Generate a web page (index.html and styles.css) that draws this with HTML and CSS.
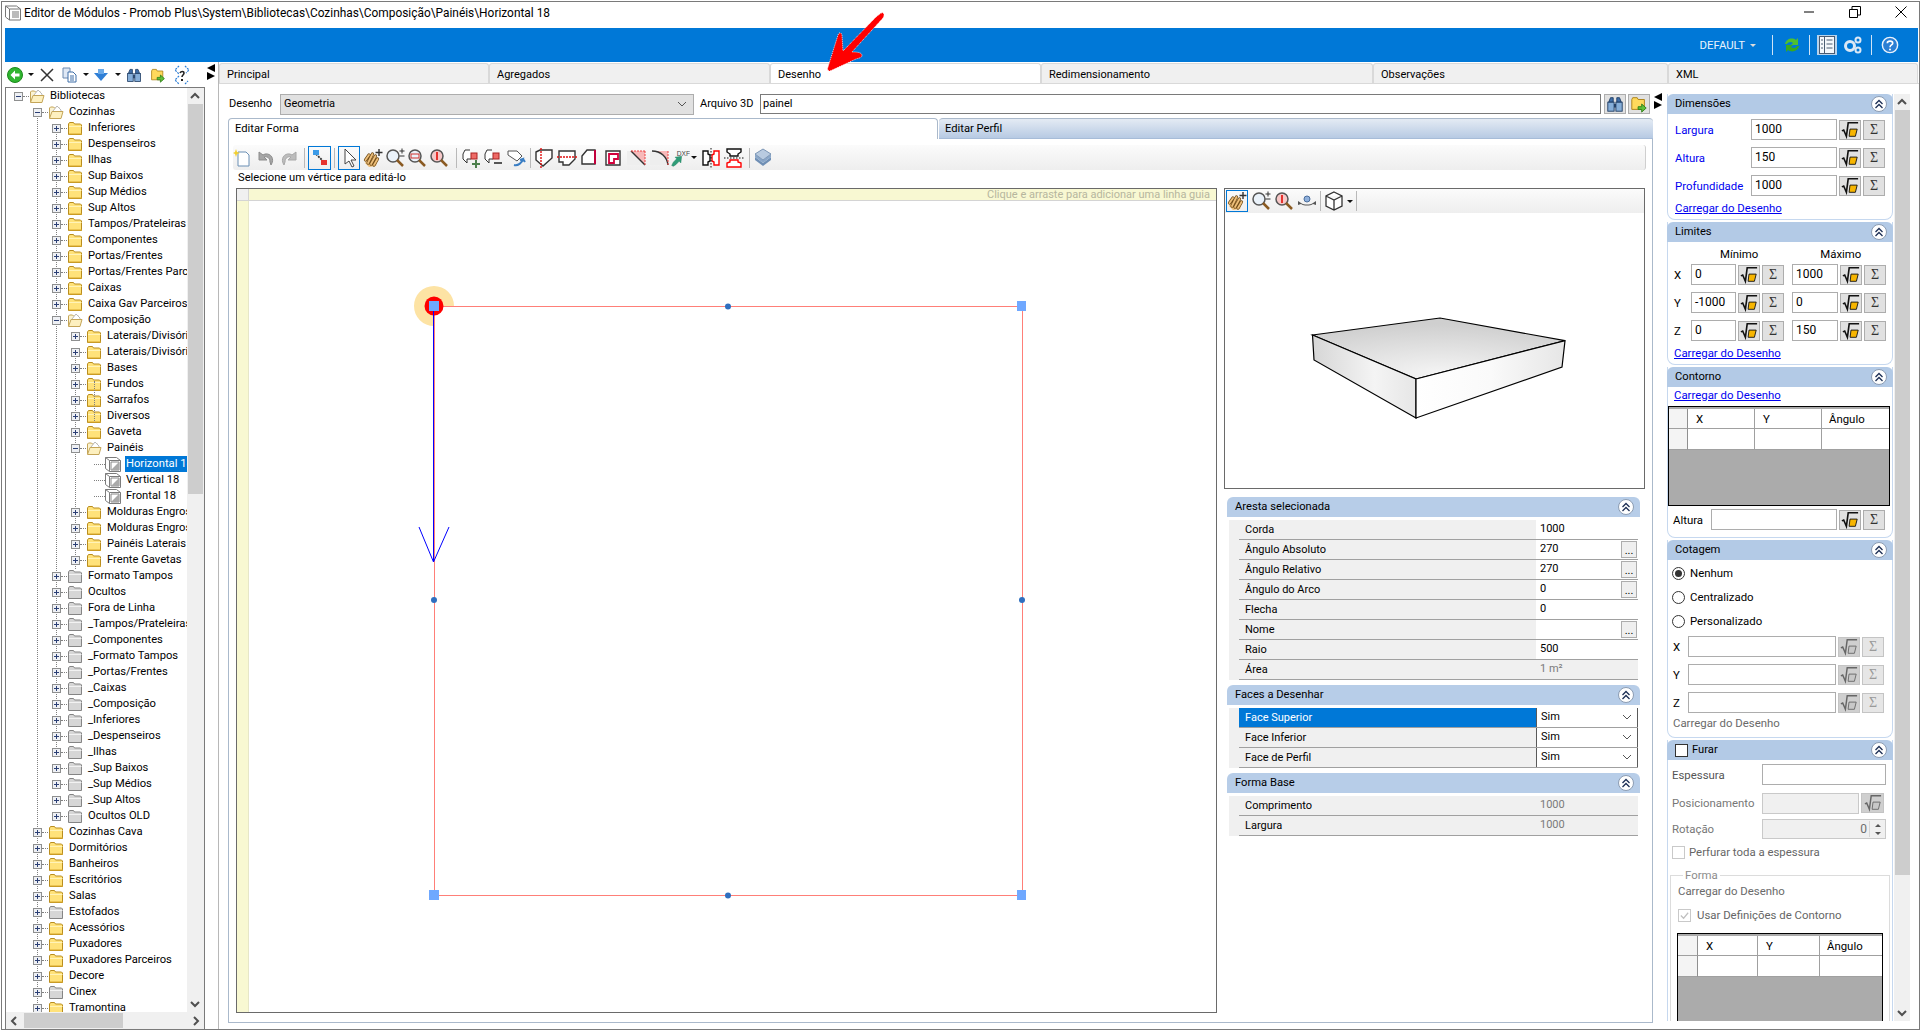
FILE: index.html
```html
<!DOCTYPE html>
<html lang="pt-BR">
<head>
<meta charset="utf-8">
<title>Editor de Módulos</title>
<link rel="stylesheet" href="styles.css">
</head>
<body>
<svg class="sprite" xmlns="http://www.w3.org/2000/svg">
  <symbol id="plus" viewBox="0 0 9 9"><rect x=".5" y=".5" width="8" height="8" fill="#eef0f4" stroke="#8e8f8f"/><path d="M2 4.5h5M4.5 2v5" stroke="#2b3f75"/></symbol>
  <symbol id="minus" viewBox="0 0 9 9"><rect x=".5" y=".5" width="8" height="8" fill="#eef0f4" stroke="#8e8f8f"/><path d="M2 4.5h5" stroke="#2b3f75"/></symbol>
  <symbol id="fy" viewBox="0 0 16 16"><path d="M1.5 14.5V4l1-1.500h4l1 1.500h6l1 1v9.500z" fill="#ffe27a" stroke="#b98d1f"/><path d="M2 6.500h12.500" stroke="#fff3b8"/><path d="M2 14h13" stroke="#d9a92c"/></symbol>
  <symbol id="fg" viewBox="0 0 16 16"><path d="M1.500 14.500V4l1-1.500h4l1 1.500h6l1 1v9.500z" fill="#d6d6d6" stroke="#858585"/><path d="M2 6.500h12.500" stroke="#f2f2f2"/></symbol>
  <symbol id="fo" viewBox="0 0 16 16"><path d="M1.500 14V4l1-1h3l1 1h5v3" fill="#fbf3d2" stroke="#c4a558"/><path d="M5 7l4-5 4 4v2" fill="#fff" stroke="#b9b9b9"/><path d="M1.500 14.500l2.500-7h11l-2 7z" fill="#fdf0bf" stroke="#c4a558"/></symbol>
  <symbol id="cube" viewBox="0 0 16 16"><path d="M.5 1.500h11l4 3v11h-11l-4-3z" fill="#fff" stroke="#7c7c7c"/><path d="M.5 1.500l4 3h11M4.500 4.500v11" fill="none" stroke="#7c7c7c"/><path d="M6 6h8v8H6z" fill="#fff" stroke="#888"/><path d="M14 6v8H6z" fill="#a9a9a9"/></symbol>
  <symbol id="back" viewBox="0 0 16 16"><circle cx="8" cy="8" r="7.500" fill="#2fb52f" stroke="#1c8a1c"/><path d="M3.500 8l4.500-4.500V6.500h4.500v3H8v3z" fill="#fff"/></symbol>
  <symbol id="x" viewBox="0 0 16 16"><path d="M2 2l12 12M14 2L2 14" stroke="#333" stroke-width="1.500"/></symbol>
  <symbol id="copy" viewBox="0 0 16 16"><path d="M1 1h7v10H1z" fill="#dfe8f5" stroke="#6d8ab0"/><path d="M6 5h5l3 3v7H6z" fill="#fff" stroke="#3f6ea8"/><path d="M8 9h4M8 11h4M8 13h4" stroke="#3f6ea8"/></symbol>
  <symbol id="down" viewBox="0 0 16 16"><path d="M1 6h14L8 14z" fill="#2f7fd6"/><path d="M5 2h6v5H5z" fill="#6aa9e8"/></symbol>
  <symbol id="bin" viewBox="0 0 20 20"><path d="M3 8l2-5h3v5zM12 8V3h3l2 5z" fill="#3f6ea8" stroke="#1d3b63"/><rect x="2" y="8" width="7" height="10" fill="#86aed8" stroke="#1d3b63"/><rect x="11" y="8" width="7" height="10" fill="#86aed8" stroke="#1d3b63"/><path d="M9 10h2v4H9z" fill="#1d3b63"/></symbol>
  <symbol id="fgo" viewBox="0 0 20 20"><path d="M2 16V5l1-2h5l1 2h7v11z" fill="#ffd95c" stroke="#a87d10"/><path d="M9 13h4v-3l5 4.500-5 4.500v-3H9z" fill="#5fbf3a" stroke="#2c7d16"/></symbol>
  <symbol id="tq" viewBox="0 0 16 20"><path d="M5 1L1 5l4 4M11 1l4 4-3 3M5 11l-4 4 4 4M11 19l3-3" fill="none" stroke="#2f7fd6" stroke-width="1.200" stroke-dasharray="2 1"/><path d="M6 8c1-2 4-2 4 0 0 2-2 2-2 4" fill="none" stroke="#222" stroke-width="1.600"/><path d="M7 14h2v2H7z" fill="#222"/></symbol>
  <symbol id="new" viewBox="0 0 20 20"><path d="M5 4h8l3 3v11H5z" fill="#fff" stroke="#6a8fb4"/><path d="M3 1l1 3 3 1-3 1-1 3-1-3-2-1 2-1z" fill="#f2cf2e"/></symbol>
  <symbol id="undo" viewBox="0 0 20 20"><path d="M3 4v8h8L8 9c3-1 6 1 6 5l1 3c4-6 0-12-6-11l-2 1z" fill="#a6a6a6" stroke="#8c8c8c"/></symbol>
  <symbol id="redo" viewBox="0 0 20 20"><path d="M17 4v8H9l3-3c-3-1-6 1-6 5l-1 3C1 11 5 5 11 6l2 1z" fill="#bdbdbd" stroke="#a8a8a8"/></symbol>
  <symbol id="vtx" viewBox="0 0 20 20"><path d="M6 6l8 8" stroke="#333" stroke-width="1.800" stroke-dasharray="2 1"/><rect x="3" y="2" width="6" height="5" fill="#3c9be8"/><rect x="11" y="12" width="6" height="5" fill="#e5332e"/></symbol>
  <symbol id="arrow" viewBox="0 0 20 20"><path d="M6 1v15l4-3 3 6 2-1-3-6h5z" fill="#fff" stroke="#444"/></symbol>
  <symbol id="hand" viewBox="0 0 20 20"><path d="M2 15L6 8h6l3 4-2 6-7 1z" fill="#eebf7a"/><g fill="none" stroke-linecap="round"><path d="M2.500 12L6 7M5 15L9.500 6M8 16L12.500 8M11 17L14.500 11" stroke="#6e4a17" stroke-width="3.200"/><path d="M2.500 12L6 7M5 15L9.500 6M8 16L12.500 8M11 17L14.500 11" stroke="#eebf7a" stroke-width="1.800"/></g><path d="M16 1v7M12.500 4.500h7" stroke="#333" stroke-width="1.400"/></symbol>
  <symbol id="zp" viewBox="0 0 20 20"><circle cx="8" cy="8" r="6" fill="#eaf2fa" stroke="#555" stroke-width="1.500"/><path d="M12 12l6 6" stroke="#8a5a22" stroke-width="2.500"/><path d="M14.500 3h5M17 .5v5M14.500 8h5" stroke="#333"/></symbol>
  <symbol id="zf" viewBox="0 0 20 20"><circle cx="8" cy="8" r="6" fill="#eaf2fa" stroke="#555" stroke-width="1.500"/><path d="M12 12l6 6" stroke="#8a5a22" stroke-width="2.500"/><rect x="4" y="6" width="8" height="4" fill="none" stroke="#d2322d"/></symbol>
  <symbol id="z1" viewBox="0 0 20 20"><circle cx="8" cy="8" r="6" fill="#f6c8c8" stroke="#555" stroke-width="1.500"/><path d="M12 12l6 6" stroke="#8a5a22" stroke-width="2.500"/><path d="M8 4v8" stroke="#e5332e" stroke-width="2"/></symbol>
  <symbol id="vadd" viewBox="0 0 20 20"><path d="M8 2H3L1 6v5l4 4V11h4" fill="#fff" stroke="#333"/><rect x="9" y="5" width="6" height="6" fill="#ee6a66" stroke="#a22"/><path d="M10 16h8M14 12v8" stroke="#4c7f4c" stroke-width="2"/></symbol>
  <symbol id="vdel" viewBox="0 0 20 20"><path d="M8 2H3L1 6v5l4 4V11h4" fill="#fff" stroke="#333"/><rect x="9" y="5" width="6" height="6" fill="#ee6a66" stroke="#a22"/><path d="M10 15h8" stroke="#555" stroke-width="2"/></symbol>
  <symbol id="vrot" viewBox="0 0 20 20"><path d="M2 3h9l5 5-5 5-9-6z" fill="#fff" stroke="#555"/><path d="M8 17c4 1 8-2 9-6l-3 1 3-1 2 3" fill="none" stroke="#3a7ec4" stroke-width="2"/></symbol>
  <symbol id="c1" viewBox="0 0 20 20"><path d="M2 4l4-2h12v8l-9 8-7-6z" fill="#fff" stroke="#333" stroke-width="1.400"/><path d="M7 0v20" stroke="#e01010" stroke-dasharray="2 1" stroke-width="1.400"/></symbol>
  <symbol id="c2" viewBox="0 0 20 20"><path d="M2 3h16v8l-6 6H6v-3H2z" fill="#fff" stroke="#333" stroke-width="1.400"/><path d="M0 9h20" stroke="#e01010" stroke-dasharray="2 1" stroke-width="1.400"/></symbol>
  <symbol id="c3" viewBox="0 0 20 20"><path d="M2 8l5-6h8v14H2z" fill="#fff" stroke="#333" stroke-width="1.400"/><path d="M15 2v14" stroke="#c2003c" stroke-width="2"/></symbol>
  <symbol id="c4" viewBox="0 0 20 20"><path d="M3 3h14v14H3z" fill="#fff" stroke="#333" stroke-width="1.400"/><path d="M6 6h9v5h-4v4H6z" fill="#fff" stroke="#d2003c" stroke-width="1.800"/></symbol>
  <symbol id="c5" viewBox="0 0 20 20"><path d="M1 3h18v14H1z" fill="#eee"/><path d="M5 3h14v14z" fill="#f7b9b9"/><path d="M5 3l14 14" stroke="#333" stroke-width="1.400"/><path d="M19 3v14M5 3h14" stroke="#e44" stroke-dasharray="2 1"/></symbol>
  <symbol id="c6" viewBox="0 0 20 20"><path d="M1 3h18v14H1z" fill="#eee"/><path d="M3 3c9 0 15 6 16 14V3z" fill="#f7b9b9"/><path d="M3 3c9 0 15 6 16 14" fill="none" stroke="#333" stroke-width="1.400"/><path d="M19 3v14" stroke="#e44" stroke-dasharray="2 1"/></symbol>
  <symbol id="dxf" viewBox="0 0 24 20"><text x="8" y="8" font-size="8" font-family="Liberation Sans" fill="#444">DXF</text><path d="M2 19l2-4 4-4-2-2 8-1-1 8-2-2-4 4-3 2z" fill="#2f9d78" stroke="#1e7a5b" stroke-width=".5"/></symbol>
  <symbol id="mv" viewBox="0 0 20 20"><path d="M2 3h5v3l2 1v6l-2 1v3H2z" fill="#fff" stroke="#111" stroke-width="1.400"/><path d="M18 3h-5v3l-2 1v6l2 1v3h5z" fill="#fff" stroke="#f00" stroke-width="1.400"/><path d="M10 0v20" stroke="#111" stroke-dasharray="1.500 1.500"/></symbol>
  <symbol id="mh" viewBox="0 0 20 20"><path d="M3 1h14v3l-3 2v2H6V6L3 4z" fill="#fff" stroke="#111" stroke-width="1.400"/><path d="M3 19h14v-4l-3-1v-2H6v2l-3 1z" fill="#fff" stroke="#f00" stroke-width="1.400"/><path d="M0 10h20" stroke="#111" stroke-dasharray="1.500 1.500"/></symbol>
  <symbol id="lay" viewBox="0 0 20 20"><path d="M2 12l8 6 8-6v-3l-8 6-8-6z" fill="#6f8fb5"/><path d="M2 9l8 6 8-6V6l-8 6-8-6z" fill="#8aa7c9"/><path d="M10 1l8 5-8 6-8-6z" fill="#b9cbe0" stroke="#7c96b5"/></symbol>
  <symbol id="orbit" viewBox="0 0 20 20"><circle cx="10" cy="8" r="3" fill="#8fb0dc" stroke="#4a6d9c"/><path d="M1 10l3 2c3 2 9 2 12 0l3-2v4l-3-1c-3 2-9 2-12 0l-3 1z" fill="#555"/></symbol>
  <symbol id="box" viewBox="0 0 20 20"><path d="M10 1l8 4v10l-8 4-8-4V5zM2 5l8 4 8-4M10 9v10" fill="#fff" stroke="#333" stroke-width="1.300"/></symbol>
  <symbol id="sync" viewBox="0 0 20 20"><path d="M3 9c1-5 7-7 11-4l2-2v7h-7l2-2c-2-2-5-1-6 1z" fill="#4fc02e"/><path d="M17 11c-1 5-7 7-11 4l-2 2v-7h7l-2 2c2 2 5 1 6-1z" fill="#38a820"/></symbol>
  <symbol id="list" viewBox="0 0 20 20"><rect x="2.500" y="1.500" width="15" height="17" fill="#f4f7fb" stroke="#4b5c72"/><path d="M7.500 1.500v17M9.500 5h6M9.500 9h6M9.500 13h6M4 5h2M4 9h2M4 13h2" stroke="#4b5c72"/></symbol>
  <symbol id="gears" viewBox="0 0 20 20"><circle cx="7" cy="11" r="4.500" fill="none" stroke="#dce8f5" stroke-width="3"/><circle cx="15" cy="5" r="2.500" fill="none" stroke="#dce8f5" stroke-width="2"/><circle cx="15" cy="15" r="2.500" fill="none" stroke="#dce8f5" stroke-width="2"/></symbol>
  <symbol id="help" viewBox="0 0 20 20"><circle cx="10" cy="10" r="8.500" fill="#2b7fd4" stroke="#e8f2fc" stroke-width="1.600"/><path d="M7 8c0-3 6-3 6 0 0 2-3 2-3 4.500" fill="none" stroke="#fff" stroke-width="1.800"/><circle cx="10" cy="15" r="1.100" fill="#fff"/></symbol>
  <symbol id="chev" viewBox="0 0 16 16"><circle cx="8" cy="8" r="7.500" fill="#fff" stroke="#8c9cb2"/><path d="M4.500 8L8 4.500 11.500 8M4.500 12L8 8.500 11.500 12" fill="none" stroke="#1d2f55" stroke-width="1.300"/></symbol>
  <symbol id="sq" viewBox="0 0 20 20"><path d="M1 11l2-1 3 7 2-15h11" fill="none" stroke="#111" stroke-width="1.800"/><path d="M10 9h8l-2 8H9z" fill="#f7b500" stroke="#111"/></symbol>
  <symbol id="sqd" viewBox="0 0 20 20"><path d="M1 11l2-1 3 7 2-15h11" fill="none" stroke="#666" stroke-width="1.600"/><path d="M10 9h8l-2 8H9z" fill="#c8c8c8" stroke="#666"/></symbol>
  <symbol id="wcube" viewBox="0 0 16 16"><path d="M.5 1h11l4 3v11h-11l-4-3z" fill="#fff" stroke="#777"/><path d="M.5 1l4 3h11M4.500 4v11" fill="none" stroke="#777"/><path d="M7 6h7v7H7z" fill="#bbb"/></symbol>
</svg>

<div class="window">
  <header class="titlebar">
    <svg class="ic16"><use href="#wcube"/></svg>
    <span class="title">Editor de Módulos - Promob Plus\System\Bibliotecas\Cozinhas\Composição\Painéis\Horizontal 18</span>
    <div class="winbtns">
      <svg class="wb" viewBox="0 0 12 12"><path d="M1 6h10" stroke="#000"/></svg>
      <svg class="wb" viewBox="0 0 12 12"><path d="M.5 3.500h8v8h-8zM3 3.500V.5h8.500V9H8.500" fill="none" stroke="#000"/></svg>
      <svg class="wb" viewBox="0 0 12 12"><path d="M.5.5l11 11M11.500.5l-11 11" stroke="#000"/></svg>
    </div>
  </header>

  <div class="bluebar">
    <span class="profile">DEFAULT</span><i class="caret white"></i>
    <i class="bsep s1"></i>
    <svg class="ic20"><use href="#sync"/></svg>
    <i class="bsep s2"></i>
    <span class="hilite"><svg class="ic20"><use href="#list"/></svg></span>
    <svg class="ic20 gear"><use href="#gears"/></svg>
    <i class="bsep s3"></i>
    <svg class="ic20 hlp"><use href="#help"/></svg>
  </div>

  <div class="main">
    <aside class="left">
      <div class="ltb">
        <svg class="ic16 a0"><use href="#back"/></svg><i class="caret a5"></i>
        <svg class="ic16 a5"><use href="#x"/></svg>
        <svg class="ic16 a7"><use href="#copy"/></svg><i class="caret a5"></i>
        <svg class="ic16 a4"><use href="#down"/></svg><i class="caret a6"></i>
        <svg class="ic16 a5"><use href="#bin"/></svg>
        <svg class="ic16 a8"><use href="#fgo"/></svg>
        <svg class="ic16t a8"><use href="#tq"/></svg>
      </div>
      <div class="treebox">
        <div class="treewrap">
          <div class="tree">
            <i class="guide g1"></i><i class="guide g2"></i><i class="guide g3"></i><i class="guide g4"></i>
            <div class="tr l0"><svg class="ex"><use href="#minus"/></svg><i class="cn"></i><svg class="fo"><use href="#fo"/></svg><span>Bibliotecas</span></div>
            <div class="tr l1"><svg class="ex"><use href="#minus"/></svg><i class="cn"></i><svg class="fo"><use href="#fo"/></svg><span>Cozinhas</span></div>
            <div class="tr l2"><svg class="ex"><use href="#plus"/></svg><i class="cn"></i><svg class="fo"><use href="#fy"/></svg><span>Inferiores</span></div>
            <div class="tr l2"><svg class="ex"><use href="#plus"/></svg><i class="cn"></i><svg class="fo"><use href="#fy"/></svg><span>Despenseiros</span></div>
            <div class="tr l2"><svg class="ex"><use href="#plus"/></svg><i class="cn"></i><svg class="fo"><use href="#fy"/></svg><span>Ilhas</span></div>
            <div class="tr l2"><svg class="ex"><use href="#plus"/></svg><i class="cn"></i><svg class="fo"><use href="#fy"/></svg><span>Sup Baixos</span></div>
            <div class="tr l2"><svg class="ex"><use href="#plus"/></svg><i class="cn"></i><svg class="fo"><use href="#fy"/></svg><span>Sup Médios</span></div>
            <div class="tr l2"><svg class="ex"><use href="#plus"/></svg><i class="cn"></i><svg class="fo"><use href="#fy"/></svg><span>Sup Altos</span></div>
            <div class="tr l2"><svg class="ex"><use href="#plus"/></svg><i class="cn"></i><svg class="fo"><use href="#fy"/></svg><span>Tampos/Prateleiras</span></div>
            <div class="tr l2"><svg class="ex"><use href="#plus"/></svg><i class="cn"></i><svg class="fo"><use href="#fy"/></svg><span>Componentes</span></div>
            <div class="tr l2"><svg class="ex"><use href="#plus"/></svg><i class="cn"></i><svg class="fo"><use href="#fy"/></svg><span>Portas/Frentes</span></div>
            <div class="tr l2"><svg class="ex"><use href="#plus"/></svg><i class="cn"></i><svg class="fo"><use href="#fy"/></svg><span>Portas/Frentes Parceiros</span></div>
            <div class="tr l2"><svg class="ex"><use href="#plus"/></svg><i class="cn"></i><svg class="fo"><use href="#fy"/></svg><span>Caixas</span></div>
            <div class="tr l2"><svg class="ex"><use href="#plus"/></svg><i class="cn"></i><svg class="fo"><use href="#fy"/></svg><span>Caixa Gav Parceiros</span></div>
            <div class="tr l2"><svg class="ex"><use href="#minus"/></svg><i class="cn"></i><svg class="fo"><use href="#fo"/></svg><span>Composição</span></div>
            <div class="tr l3"><svg class="ex"><use href="#plus"/></svg><i class="cn"></i><svg class="fo"><use href="#fy"/></svg><span>Laterais/Divisórias</span></div>
            <div class="tr l3"><svg class="ex"><use href="#plus"/></svg><i class="cn"></i><svg class="fo"><use href="#fy"/></svg><span>Laterais/Divisórias</span></div>
            <div class="tr l3"><svg class="ex"><use href="#plus"/></svg><i class="cn"></i><svg class="fo"><use href="#fy"/></svg><span>Bases</span></div>
            <div class="tr l3"><svg class="ex"><use href="#plus"/></svg><i class="cn"></i><svg class="fo"><use href="#fy"/></svg><span>Fundos</span></div>
            <div class="tr l3"><svg class="ex"><use href="#plus"/></svg><i class="cn"></i><svg class="fo"><use href="#fy"/></svg><span>Sarrafos</span></div>
            <div class="tr l3"><svg class="ex"><use href="#plus"/></svg><i class="cn"></i><svg class="fo"><use href="#fy"/></svg><span>Diversos</span></div>
            <div class="tr l3"><svg class="ex"><use href="#plus"/></svg><i class="cn"></i><svg class="fo"><use href="#fy"/></svg><span>Gaveta</span></div>
            <div class="tr l3"><svg class="ex"><use href="#minus"/></svg><i class="cn"></i><svg class="fo"><use href="#fo"/></svg><span>Painéis</span></div>
            <div class="tr l4"><i class="cn long"></i><svg class="fo"><use href="#cube"/></svg><span class="sel">Horizontal 18</span></div>
            <div class="tr l4"><i class="cn long"></i><svg class="fo"><use href="#cube"/></svg><span>Vertical 18</span></div>
            <div class="tr l4"><i class="cn long"></i><svg class="fo"><use href="#cube"/></svg><span>Frontal 18</span></div>
            <div class="tr l3"><svg class="ex"><use href="#plus"/></svg><i class="cn"></i><svg class="fo"><use href="#fy"/></svg><span>Molduras Engrossadas</span></div>
            <div class="tr l3"><svg class="ex"><use href="#plus"/></svg><i class="cn"></i><svg class="fo"><use href="#fy"/></svg><span>Molduras Engrossadas</span></div>
            <div class="tr l3"><svg class="ex"><use href="#plus"/></svg><i class="cn"></i><svg class="fo"><use href="#fy"/></svg><span>Painéis Laterais</span></div>
            <div class="tr l3"><svg class="ex"><use href="#plus"/></svg><i class="cn"></i><svg class="fo"><use href="#fy"/></svg><span>Frente Gavetas</span></div>
            <div class="tr l2"><svg class="ex"><use href="#plus"/></svg><i class="cn"></i><svg class="fo"><use href="#fg"/></svg><span>Formato Tampos</span></div>
            <div class="tr l2"><svg class="ex"><use href="#plus"/></svg><i class="cn"></i><svg class="fo"><use href="#fg"/></svg><span>Ocultos</span></div>
            <div class="tr l2"><svg class="ex"><use href="#plus"/></svg><i class="cn"></i><svg class="fo"><use href="#fg"/></svg><span>Fora de Linha</span></div>
            <div class="tr l2"><svg class="ex"><use href="#plus"/></svg><i class="cn"></i><svg class="fo"><use href="#fg"/></svg><span>_Tampos/Prateleiras</span></div>
            <div class="tr l2"><svg class="ex"><use href="#plus"/></svg><i class="cn"></i><svg class="fo"><use href="#fg"/></svg><span>_Componentes</span></div>
            <div class="tr l2"><svg class="ex"><use href="#plus"/></svg><i class="cn"></i><svg class="fo"><use href="#fg"/></svg><span>_Formato Tampos</span></div>
            <div class="tr l2"><svg class="ex"><use href="#plus"/></svg><i class="cn"></i><svg class="fo"><use href="#fg"/></svg><span>_Portas/Frentes</span></div>
            <div class="tr l2"><svg class="ex"><use href="#plus"/></svg><i class="cn"></i><svg class="fo"><use href="#fg"/></svg><span>_Caixas</span></div>
            <div class="tr l2"><svg class="ex"><use href="#plus"/></svg><i class="cn"></i><svg class="fo"><use href="#fg"/></svg><span>_Composição</span></div>
            <div class="tr l2"><svg class="ex"><use href="#plus"/></svg><i class="cn"></i><svg class="fo"><use href="#fg"/></svg><span>_Inferiores</span></div>
            <div class="tr l2"><svg class="ex"><use href="#plus"/></svg><i class="cn"></i><svg class="fo"><use href="#fg"/></svg><span>_Despenseiros</span></div>
            <div class="tr l2"><svg class="ex"><use href="#plus"/></svg><i class="cn"></i><svg class="fo"><use href="#fg"/></svg><span>_Ilhas</span></div>
            <div class="tr l2"><svg class="ex"><use href="#plus"/></svg><i class="cn"></i><svg class="fo"><use href="#fg"/></svg><span>_Sup Baixos</span></div>
            <div class="tr l2"><svg class="ex"><use href="#plus"/></svg><i class="cn"></i><svg class="fo"><use href="#fg"/></svg><span>_Sup Médios</span></div>
            <div class="tr l2"><svg class="ex"><use href="#plus"/></svg><i class="cn"></i><svg class="fo"><use href="#fg"/></svg><span>_Sup Altos</span></div>
            <div class="tr l2"><svg class="ex"><use href="#plus"/></svg><i class="cn"></i><svg class="fo"><use href="#fg"/></svg><span>Ocultos OLD</span></div>
            <div class="tr l1"><svg class="ex"><use href="#plus"/></svg><i class="cn"></i><svg class="fo"><use href="#fy"/></svg><span>Cozinhas Cava</span></div>
            <div class="tr l1"><svg class="ex"><use href="#plus"/></svg><i class="cn"></i><svg class="fo"><use href="#fy"/></svg><span>Dormitórios</span></div>
            <div class="tr l1"><svg class="ex"><use href="#plus"/></svg><i class="cn"></i><svg class="fo"><use href="#fy"/></svg><span>Banheiros</span></div>
            <div class="tr l1"><svg class="ex"><use href="#plus"/></svg><i class="cn"></i><svg class="fo"><use href="#fy"/></svg><span>Escritórios</span></div>
            <div class="tr l1"><svg class="ex"><use href="#plus"/></svg><i class="cn"></i><svg class="fo"><use href="#fy"/></svg><span>Salas</span></div>
            <div class="tr l1"><svg class="ex"><use href="#plus"/></svg><i class="cn"></i><svg class="fo"><use href="#fg"/></svg><span>Estofados</span></div>
            <div class="tr l1"><svg class="ex"><use href="#plus"/></svg><i class="cn"></i><svg class="fo"><use href="#fy"/></svg><span>Acessórios</span></div>
            <div class="tr l1"><svg class="ex"><use href="#plus"/></svg><i class="cn"></i><svg class="fo"><use href="#fy"/></svg><span>Puxadores</span></div>
            <div class="tr l1"><svg class="ex"><use href="#plus"/></svg><i class="cn"></i><svg class="fo"><use href="#fy"/></svg><span>Puxadores Parceiros</span></div>
            <div class="tr l1"><svg class="ex"><use href="#plus"/></svg><i class="cn"></i><svg class="fo"><use href="#fy"/></svg><span>Decore</span></div>
            <div class="tr l1"><svg class="ex"><use href="#plus"/></svg><i class="cn"></i><svg class="fo"><use href="#fg"/></svg><span>Cinex</span></div>
            <div class="tr l1"><svg class="ex"><use href="#plus"/></svg><i class="cn"></i><svg class="fo"><use href="#fy"/></svg><span>Tramontina</span></div>
          </div>
          <div class="vscroll tree-v">
            <svg class="sa" viewBox="0 0 16 16"><path d="M4 10l4-4 4 4" fill="none" stroke="#505050" stroke-width="2"/></svg>
            <i class="thumb t1"></i><i class="rest"></i>
            <svg class="sa" viewBox="0 0 16 16"><path d="M4 6l4 4 4-4" fill="none" stroke="#505050" stroke-width="2"/></svg>
          </div>
        </div>
        <div class="hscroll">
          <svg class="sa" viewBox="0 0 16 16"><path d="M10 4L6 8l4 4" fill="none" stroke="#505050" stroke-width="2"/></svg>
          <i class="hthumb"></i><i class="rest"></i>
          <svg class="sa" viewBox="0 0 16 16"><path d="M6 4l4 4-4 4" fill="none" stroke="#505050" stroke-width="2"/></svg>
        </div>
      </div>
    </aside>

    <div class="split"><i class="tri l"></i><i class="tri r"></i></div>

    <section class="content">
      <nav class="tabs">
        <div class="tab w1">Principal</div>
        <div class="tab w2">Agregados</div>
        <div class="tab w3 on">Desenho</div>
        <div class="tab w4">Redimensionamento</div>
        <div class="tab w5">Observações</div>
        <div class="tab w6">XML</div>
      </nav>
      <div class="tabbody">
        <div class="center">
          <div class="drow">
            <span class="dlabel">Desenho</span>
            <div class="select"><span>Geometria</span><svg class="chevd" viewBox="0 0 10 6"><path d="M1 1l4 4 4-4" fill="none" stroke="#555"/></svg></div>
            <span class="alabel">Arquivo 3D</span>
            <div class="file">painel</div>
            <span class="tbtn"><svg class="ic18"><use href="#bin"/></svg></span>
            <span class="tbtn"><svg class="ic18"><use href="#fgo"/></svg></span>
          </div>
          <div class="subtabs">
            <div class="stab on">Editar Forma</div>
            <div class="stab off">Editar Perfil</div>
          </div>
          <div class="subpanel">
            <div class="tb">
              <svg class="ti"><use href="#new"/></svg>
              <svg class="ti"><use href="#undo"/></svg>
              <svg class="ti"><use href="#redo"/></svg>
              <i class="tsep m2"></i>
              <span class="tsel w23"><svg class="ti"><use href="#vtx"/></svg></span>
              <i class="tsep"></i>
              <span class="tsel w22"><svg class="ti"><use href="#arrow"/></svg></span>
              <svg class="ti"><use href="#hand"/></svg>
              <svg class="ti n1"><use href="#zp"/></svg>
              <svg class="ti n1"><use href="#zf"/></svg>
              <svg class="ti n1"><use href="#z1"/></svg>
              <i class="tsep m4"></i>
              <svg class="ti m2"><use href="#vadd"/></svg>
              <svg class="ti n1"><use href="#vdel"/></svg>
              <svg class="ti n1"><use href="#vrot"/></svg>
              <i class="tsep m1"></i>
              <svg class="ti"><use href="#c1"/></svg>
              <svg class="ti"><use href="#c2"/></svg>
              <svg class="ti"><use href="#c3"/></svg>
              <svg class="ti"><use href="#c4"/></svg>
              <svg class="ti"><use href="#c5"/></svg>
              <svg class="ti"><use href="#c6"/></svg>
              <svg class="ti n2"><use href="#dxf"/></svg>
              <i class="caret n2"></i>
              <svg class="ti m1"><use href="#mv"/></svg>
              <svg class="ti"><use href="#mh"/></svg>
              <i class="tsep m2"></i>
              <svg class="ti"><use href="#lay"/></svg>
            </div>
            <div class="hint">Selecione um vértice para editá-lo</div>
            <div class="editor">
              <div class="canvas">
                <div class="corner"></div>
                <div class="rtop">Clique e arraste para adicionar uma linha guia</div>
                <div class="rleft"></div>
                <svg class="draw" viewBox="249 201 967 811">
                  <path d="M434.500 306.500H1022.500V895.500H434.500Z" fill="none" stroke="#ff7f78"/>
                  <path d="M434 306L454 306A20 20 0 1 0 434 326Z" fill="#fde3a4"/>
                  <path d="M434 306.500H456" stroke="#ff7f78"/>
                  <circle cx="434" cy="306" r="9.500" fill="#f00"/>
                  <path d="M433.500 306V562" stroke="#0000ff"/>
                  <path d="M419 527L433.500 562L449 527" fill="none" stroke="#0000ff"/>
                  <rect x="429" y="301" width="10" height="10" fill="#6fa8ff"/>
                  <rect x="1017" y="301" width="9" height="10" fill="#6fa8ff"/>
                  <rect x="429" y="890" width="10" height="10" fill="#6fa8ff"/>
                  <rect x="1017" y="890" width="9" height="10" fill="#6fa8ff"/>
                  <circle cx="728" cy="306.500" r="3" fill="#2f6fbf"/>
                  <circle cx="434" cy="600" r="3" fill="#2f6fbf"/>
                  <circle cx="1022" cy="600" r="3" fill="#2f6fbf"/>
                  <circle cx="728" cy="895.500" r="3" fill="#2f6fbf"/>
                </svg>
              </div>
              <div class="rightcol">
                <div class="preview">
                  <div class="ptb">
                    <span class="tsel w22"><svg class="ti"><use href="#hand"/></svg></span>
                    <svg class="ti"><use href="#zp"/></svg>
                    <svg class="ti"><use href="#z1"/></svg>
                    <svg class="ti"><use href="#orbit"/></svg>
                    <i class="tsep"></i>
                    <svg class="ti"><use href="#box"/></svg><i class="caret"></i>
                    <i class="tsep"></i>
                  </div>
                  <svg class="box3d" viewBox="1225 213 419 275">
                    <defs>
                      <radialGradient id="gt" cx=".5" cy=".9" r=".8"><stop offset="0" stop-color="#f4f4f4"/><stop offset="1" stop-color="#cfcfcf"/></radialGradient>
                      <linearGradient id="gl" x1="1" y1="0" x2="0" y2="0"><stop offset="0" stop-color="#e6e6e6"/><stop offset=".4" stop-color="#f4f4f4"/><stop offset="1" stop-color="#d6d6d6"/></linearGradient>
                      <linearGradient id="gr" x1="0" y1="0" x2="1" y2="0"><stop offset="0" stop-color="#fff"/><stop offset=".5" stop-color="#fafafa"/><stop offset="1" stop-color="#e6e6e6"/></linearGradient>
                    </defs>
                    <path d="M1312.500 335L1440 318L1565 340.700L1416 379Z" fill="url(#gt)" stroke="#000" stroke-width="1.200"/>
                    <path d="M1312.500 335L1416 379V418L1314 360Z" fill="url(#gl)" stroke="#000" stroke-width="1.200"/>
                    <path d="M1416 379L1565 340.700L1562 367L1416 418Z" fill="url(#gr)" stroke="#000" stroke-width="1.200"/>
                  </svg>
                </div>
                <div class="props">
                  <div class="ph"><span>Aresta selecionada</span><svg class="chev"><use href="#chev"/></svg></div>
                  <div class="pg">
                    <div class="pr"><span class="pl">Corda</span><span class="pv">1000</span></div>
                    <div class="pr"><span class="pl">Ângulo Absoluto</span><span class="pv">270<i class="dots">...</i></span></div>
                    <div class="pr"><span class="pl">Ângulo Relativo</span><span class="pv">270<i class="dots">...</i></span></div>
                    <div class="pr"><span class="pl">Ângulo do Arco</span><span class="pv">0<i class="dots">...</i></span></div>
                    <div class="pr"><span class="pl">Flecha</span><span class="pv">0</span></div>
                    <div class="pr"><span class="pl">Nome</span><span class="pv"><i class="dots">...</i></span></div>
                    <div class="pr"><span class="pl">Raio</span><span class="pv">500</span></div>
                    <div class="pr"><span class="pl">Área</span><span class="pv ro">1 m²</span></div>
                  </div>
                  <div class="ph"><span>Faces a Desenhar</span><svg class="chev"><use href="#chev"/></svg></div>
                  <div class="pg">
                    <div class="pr"><span class="pl blue">Face Superior</span><span class="pv dd">Sim<svg class="chevd" viewBox="0 0 10 6"><path d="M1 1l4 4 4-4" fill="none" stroke="#555"/></svg></span></div>
                    <div class="pr"><span class="pl">Face Inferior</span><span class="pv dd">Sim<svg class="chevd" viewBox="0 0 10 6"><path d="M1 1l4 4 4-4" fill="none" stroke="#555"/></svg></span></div>
                    <div class="pr"><span class="pl">Face de Perfil</span><span class="pv dd">Sim<svg class="chevd" viewBox="0 0 10 6"><path d="M1 1l4 4 4-4" fill="none" stroke="#555"/></svg></span></div>
                  </div>
                  <div class="ph"><span>Forma Base</span><svg class="chev"><use href="#chev"/></svg></div>
                  <div class="pg">
                    <div class="pr"><span class="pl">Comprimento</span><span class="pv ro">1000</span></div>
                    <div class="pr"><span class="pl">Largura</span><span class="pv ro">1000</span></div>
                  </div>
                </div>
              </div>
            </div>
          </div>
        </div>

        <div class="split2"><i class="tri l"></i><i class="tri r"></i></div>

        <aside class="side">
          <div class="panels">
            <div class="sp">
              <div class="sh"><span>Dimensões</span><svg class="chev"><use href="#chev"/></svg></div>
              <div class="sb dim">
                <div class="fr"><span class="fl lnk">Largura</span><div class="inp w86">1000</div><span class="fb"><svg class="ic18"><use href="#sq"/></svg></span><span class="fb sg">Σ</span></div>
                <div class="fr"><span class="fl lnk">Altura</span><div class="inp w86">150</div><span class="fb"><svg class="ic18"><use href="#sq"/></svg></span><span class="fb sg">Σ</span></div>
                <div class="fr"><span class="fl lnk">Profundidade</span><div class="inp w86">1000</div><span class="fb"><svg class="ic18"><use href="#sq"/></svg></span><span class="fb sg">Σ</span></div>
                <a class="link mt">Carregar do Desenho</a>
              </div>
            </div>
            <div class="sp">
              <div class="sh"><span>Limites</span><svg class="chev"><use href="#chev"/></svg></div>
              <div class="sb lim">
                <div class="limhead"><span>Mínimo</span><span>Máximo</span></div>
                <div class="fr"><span class="fx">X</span><div class="inp w45">0</div><span class="fb"><svg class="ic18"><use href="#sq"/></svg></span><span class="fb sg">Σ</span><div class="inp w47 gapl">1000</div><span class="fb"><svg class="ic18"><use href="#sq"/></svg></span><span class="fb sg">Σ</span></div>
                <div class="fr"><span class="fx">Y</span><div class="inp w45">-1000</div><span class="fb"><svg class="ic18"><use href="#sq"/></svg></span><span class="fb sg">Σ</span><div class="inp w47 gapl">0</div><span class="fb"><svg class="ic18"><use href="#sq"/></svg></span><span class="fb sg">Σ</span></div>
                <div class="fr"><span class="fx">Z</span><div class="inp w45">0</div><span class="fb"><svg class="ic18"><use href="#sq"/></svg></span><span class="fb sg">Σ</span><div class="inp w47 gapl">150</div><span class="fb"><svg class="ic18"><use href="#sq"/></svg></span><span class="fb sg">Σ</span></div>
                <a class="link mt">Carregar do Desenho</a>
              </div>
            </div>
            <div class="sp">
              <div class="sh"><span>Contorno</span><svg class="chev"><use href="#chev"/></svg></div>
              <div class="sb con">
                <a class="link">Carregar do Desenho</a>
                <div class="dg g1h">
                  <div class="dgr"><b></b><b>X</b><b>Y</b><b>Ângulo</b></div>
                  <div class="dgr tall"><b></b><b></b><b></b><b></b></div>
                </div>
                <div class="fr alt"><span class="fa">Altura</span><div class="inp w127"></div><span class="fb"><svg class="ic18"><use href="#sq"/></svg></span><span class="fb sg">Σ</span></div>
              </div>
            </div>
            <div class="sp">
              <div class="sh"><span>Cotagem</span><svg class="chev"><use href="#chev"/></svg></div>
              <div class="sb cot">
                <div class="rad"><i class="radio on"></i>Nenhum</div>
                <div class="rad"><i class="radio"></i>Centralizado</div>
                <div class="rad"><i class="radio"></i>Personalizado</div>
                <div class="fr"><span class="fx2">X</span><div class="inp w149"></div><span class="fb dis"><svg class="ic18"><use href="#sqd"/></svg></span><span class="fb sg dis">Σ</span></div>
                <div class="fr"><span class="fx2">Y</span><div class="inp w149"></div><span class="fb dis"><svg class="ic18"><use href="#sqd"/></svg></span><span class="fb sg dis">Σ</span></div>
                <div class="fr"><span class="fx2">Z</span><div class="inp w149"></div><span class="fb dis"><svg class="ic18"><use href="#sqd"/></svg></span><span class="fb sg dis">Σ</span></div>
                <div class="plain">Carregar do Desenho</div>
              </div>
            </div>
            <div class="sp last">
              <div class="sh"><span class="shchk"><i class="check"></i>Furar</span><svg class="chev"><use href="#chev"/></svg></div>
              <div class="sb fur">
                <div class="fr r1"><span class="fw">Espessura</span><div class="inp w124"></div></div>
                <div class="fr r2"><span class="fw gr">Posicionamento</span><div class="inp dis w97"></div><span class="fb dis s22"><svg class="ic18"><use href="#sqd"/></svg></span></div>
                <div class="fr r3"><span class="fw gr">Rotação</span><div class="inp dis spin w124">0<span class="spn"><i class="up"></i><i class="dn"></i></span></div></div>
                <div class="chk"><i class="check lt"></i>Perfurar toda a espessura</div>
                <fieldset class="forma">
                  <legend>Forma</legend>
                  <div class="plain f1">Carregar do Desenho</div>
                  <div class="chk f2"><i class="check lt ticked"><svg viewBox="0 0 12 12"><path d="M2 6l3 3 5-6" fill="none" stroke="#c0c0c0" stroke-width="1.300"/></svg></i>Usar Definições de Contorno</div>
                  <div class="dg g2h">
                    <div class="dgr g2c"><b></b><b>X</b><b>Y</b><b>Ângulo</b></div>
                    <div class="dgr g2c tall"><b></b><b></b><b></b><b></b></div>
                  </div>
                </fieldset>
              </div>
            </div>
          </div>
          <div class="vscroll side-v">
            <svg class="sa" viewBox="0 0 16 16"><path d="M4 10l4-4 4 4" fill="none" stroke="#505050" stroke-width="2"/></svg>
            <i class="thumb t2"></i><i class="rest"></i>
            <svg class="sa" viewBox="0 0 16 16"><path d="M4 6l4 4 4-4" fill="none" stroke="#505050" stroke-width="2"/></svg>
          </div>
        </aside>
      </div>
    </section>
  </div>
</div>

<svg class="redarrow" viewBox="0 0 70 70">
  <path d="M55 2C58 1 59 4 57 7L26 41C30 41 35 41 36 44C36 47 33 47 30 48L4 60C2 60 1 59 2 56L12 24C13 21 15 21 16 24L17 40L50 6Z" fill="#f00" stroke="#fff" stroke-width=".8" stroke-dasharray="1 1"/>
</svg>
</body>
</html>
```
FILE: styles.css
```css
* { box-sizing: border-box; }
html, body { margin: 0; padding: 0; }
body {
  width: 1920px; height: 1036px; overflow: hidden; background: #fff; position: relative;
  font: 11.200px/16px Roboto, "Liberation Sans", sans-serif; color: #000;
}
i { font-style: normal; display: block; }
.sprite { position: absolute; width: 0; height: 0; }

.window {
  width: 1919px; height: 1029px; margin: 1px 0 0 1px; border: 1px solid #7a7a7a;
  display: flex; flex-direction: column; background: #fff;
}
.titlebar { height: 26px; flex: none; display: flex; align-items: center; padding: 0 0 4px 3px; }
.ic16 { width: 16px; height: 16px; flex: none; }
.ic16t { width: 16px; height: 20px; flex: none; }
.title { margin-left: 3px; font-size: 11.900px; white-space: nowrap; }
.winbtns { margin-left: auto; display: flex; gap: 34px; padding-right: 12px; margin-top: -2px; }
.wb { width: 12px; height: 12px; }

.bluebar {
  height: 34px; flex: none; margin-left: 3px; margin-right: 1px; background: #0078d7; color: #e8f2fc;
  display: flex; align-items: center; justify-content: flex-end; padding-right: 19px;
}
.profile { font-size: 11.400px; }
.caret { width: 0; height: 0; border: 3px solid transparent; border-top: 3px solid #111; border-bottom: 0; flex: none; }
.caret.white { border-top-color: #dcdcdc; margin-left: 5px; }
.bsep { width: 1px; height: 20px; background: #cfe3f6; flex: none; }
.s1 { margin-left: 16px; margin-right: 9px; }
.s2 { margin-left: 7px; margin-right: 7px; }
.s3 { margin-left: 8px; margin-right: 9px; }
.ic20 { width: 20px; height: 20px; flex: none; display: block; }
.hilite { width: 20px; height: 20px; background: #b8d3ec; display: block; }
.gear { margin-left: 6px; }
.hlp { width: 18px; }

.main { flex: 1; min-height: 0; display: flex; }
.left { width: 200px; margin-left: 3px; flex: none; display: flex; flex-direction: column; }
.ltb { height: 25px; flex: none; display: flex; align-items: center; padding-left: 2px; }
.a0 { margin-left: 0; }
.a4 { margin-left: 4px; }
.a5 { margin-left: 5px; }
.a6 { margin-left: 6px; }
.a7 { margin-left: 7px; }
.a8 { margin-left: 8px; }
.treebox { flex: 1; min-height: 0; border: 1px solid #7a7a7a; border-bottom: 0; display: flex; flex-direction: column; }
.treewrap { flex: 1; min-height: 0; display: flex; }
.tree { width: 181px; flex: none; overflow: hidden; position: relative; background: #fff; }
.tr { height: 16px; display: flex; align-items: center; white-space: nowrap; }
.tr span { margin-left: 4px; padding: 0 1px; line-height: 16px; }
.tr .sel { background: #0078d7; color: #fff; }
.l0 { padding-left: 8px; }
.l1 { padding-left: 27px; }
.l2 { padding-left: 46px; }
.l3 { padding-left: 65px; }
.l4 { padding-left: 88px; }
.ex { width: 9px; height: 9px; flex: none; position: relative; z-index: 1; }
.fo { width: 16px; height: 16px; flex: none; }
.cn { width: 6px; height: 0; border-top: 1px dotted #808080; flex: none; }
.cn.long { width: 11px; }
.guide { position: absolute; width: 0; border-left: 1px dotted #808080; }
.g1 { left: 31px; top: 21px; height: 900px; }
.g2 { left: 50px; top: 37px; height: 624px; }
.g3 { left: 69px; top: 261px; height: 220px; }
.g4 { left: 88px; top: 293px; height: 40px; }

.vscroll { background: #f0f0f0; display: flex; flex-direction: column; flex: none; }
.tree-v { width: 17px; }
.sa { width: 16px; height: 16px; flex: none; display: block; }
.thumb { background: #cdcdcd; flex: none; margin: 0 1px; }
.t1 { height: 390px; }
.t2 { height: 765px; }
.rest { flex: 1; }
.hscroll { height: 17px; flex: none; display: flex; background: #f0f0f0; align-items: center; }
.hthumb { width: 99px; height: 15px; background: #cdcdcd; flex: none; margin-left: 2px; }

.split { width: 13px; flex: none; padding: 2px 0 0 2px; }
.tri { width: 0; height: 0; border: 4.500px solid transparent; }
.tri.l { border-right: 8px solid #000; border-left: 0; }
.tri.r { border-left: 8px solid #000; border-right: 0; }

.content { flex: 1; min-width: 0; border-left: 1px solid #b8b8b8; display: flex; flex-direction: column; }
.tabs { height: 21px; margin-top: 1px; flex: none; display: flex; border-bottom: 1px solid #d9d9d9; font-size: 11px; }
.tab { background: #f0f0f0; border: 1px solid #d9d9d9; border-bottom: 0; border-radius: 3px 3px 0 0; padding: 3px 0 0 7px; flex: none; }
.tab.on { background: #fff; }
.w1 { width: 270px; }
.w2 { width: 281px; }
.w3 { width: 271px; }
.w4 { width: 332px; }
.w5 { width: 295px; }
.w6 { width: 250px; }

.tabbody { flex: 1; min-height: 0; display: flex; }
.center { width: 1434px; flex: none; padding: 10px 0 0 9px; display: flex; flex-direction: column; }
.drow { height: 20px; flex: none; display: flex; align-items: center; font-size: 11px; }
.dlabel { margin-left: 1px; width: 51px; }
.select { width: 414px; height: 21px; background: #e1e1e1; border: 1px solid #adadad; display: flex; align-items: center; justify-content: space-between; padding: 0 6px 0 3px; flex: none; }
.chevd { width: 10px; height: 6px; flex: none; }
.alabel { margin-left: 6px; width: 60px; flex: none; }
.file { width: 841px; height: 20px; border: 1px solid #7a7a7a; padding: 1px 2px; flex: none; }
.tbtn { width: 22px; height: 20px; background: #e1e1e1; border: 1px solid #adadad; margin-left: 3px; flex: none; display: flex; align-items: center; justify-content: center; }
.ic18 { width: 18px; height: 18px; display: block; flex: none; }
.tbtn + .tbtn { margin-left: 2px; }

.subtabs { height: 21px; margin-top: 4px; flex: none; display: flex; }
.stab { border-top: 1px solid #aab9cb; padding: 2px 0 0 6px; flex: none; border-radius: 4px 4px 0 0; }
.stab.on { width: 710px; background: #fff; border-left: 1px solid #aab9cb; border-right: 1px solid #aab9cb; }
.stab.off { width: 714px; margin-left: 1px; background: linear-gradient(#e4ebf4, #b7cae3); border-bottom: 1px solid #a7bcd8; }
.subpanel { flex: none; height: 884px; width: 1425px; border: 1px solid #aab9cb; border-top: 0; padding: 6px 6px 0 4px; display: flex; flex-direction: column; }

.tb { height: 25px; flex: none; display: flex; align-items: center; gap: 3px; background: linear-gradient(#fbfbfb, #eeeeee); border-radius: 3px; border-right: 1px solid #cfcfcf; }
.ti { width: 20px; height: 20px; flex: none; display: block; }
.tsep { width: 1px; height: 20px; background: #b9b9b9; flex: none; }
.tsel { height: 24px; border: 1px solid #0078d7; display: flex; align-items: center; justify-content: center; flex: none; }
.w23 { width: 23px; }
.w22 { width: 22px; }
.m1 { margin-left: 1px; }
.m2 { margin-left: 2px; }
.m4 { margin-left: 4px; }
.n1 { margin-left: -1px; }
.n2 { margin-left: -2px; }
.hint { height: 18px; flex: none; padding-left: 5px; line-height: 15px; }

.editor { height: 825px; flex: none; display: flex; margin-left: 3px; }
.canvas { width: 981px; flex: none; height: 825px; border: 1px solid #6a6a6a; display: grid; grid-template-columns: 12px 1fr; grid-template-rows: 12px 1fr; }
.corner { background: #f0f0f0; border-right: 1px solid #d4d4d4; border-bottom: 1px solid #d4d4d4; }
.rtop { background: #f8f8d2; border-bottom: 1px solid #d4d4d4; text-align: right; font-size: 11px; line-height: 12px; color: #b6b69e; padding-right: 6px; overflow: hidden; white-space: nowrap; }
.rleft { background: #f8f8d2; border-right: 1px solid #e6e6c8; }
.draw { width: 967px; height: 811px; display: block; }

.rightcol { width: 421px; margin-left: 7px; flex: none; display: flex; flex-direction: column; }
.preview { height: 301px; flex: none; border: 1px solid #6a6a6a; display: flex; flex-direction: column; }
.ptb { height: 24px; flex: none; display: flex; align-items: center; gap: 3px; background: linear-gradient(#fbfbfb, #eeeeee); padding-left: 1px; }
.ptb .tsel { height: 22px; }
.box3d { flex: 1; min-height: 0; display: block; width: 100%; }
.props { margin: 8px 5px 0 3px; }
.ph { height: 20px; background: #b7cde8; border-radius: 6px 6px 0 0; display: flex; align-items: center; justify-content: space-between; padding: 0 6px 0 8px; }
.chev { width: 16px; height: 16px; flex: none; }
.pg { margin: 3px 2px 5px; background: #f0f0f0; padding-left: 10px; font-size: 11px; }
.pr { height: 20px; display: flex; border-bottom: 1px solid #a0a0a0; }
.pl { width: 297px; flex: none; padding: 2px 0 0 6px; }
.pl.blue { background: #0078d7; color: #fff; }
.pv { flex: 1; background: #fff; padding: 1px 0 0 4px; position: relative; height: 19px; }
.pv.ro { background: #f0f0f0; color: #7a7a7a; }
.pv.dd { border-left: 1px solid #5a5a5a; border-right: 1px solid #5a5a5a; display: flex; justify-content: space-between; align-items: center; padding: 0 5px 2px 4px; }
.dots { position: absolute; right: 1px; top: 1px; width: 16px; height: 17px; background: #efefef; border: 1px solid #adadad; text-align: center; line-height: 17px; font-size: 11px; color: #000; }

.split2 { width: 14px; flex: none; padding: 9px 0 0 1px; }
.side { width: 243px; height: 927px; margin-top: 10px; flex: none; display: flex; overflow: hidden; font-size: 11.400px; }
.panels { width: 226px; flex: none; }
.side-v { width: 17px; margin-left: 1px; }
.sp { border: 1px solid #c6d8ef; border-top: 0; border-radius: 0 0 8px 8px; margin-bottom: 2px; }
.sh { height: 20px; margin: 0 -1px; background: #b3cae6; border-radius: 6px 6px 0 0; display: flex; align-items: center; justify-content: space-between; padding: 0 6px 0 8px; font-size: 11.200px; }
.sb { padding: 5px 6px 4px 7px; }
.fr { display: flex; align-items: center; height: 21px; margin-bottom: 7px; }
.fl { width: 76px; flex: none; }
.lnk { color: #0000f0; }
.inp { height: 21px; border: 1px solid #adadad; background: #fff; padding: 1px 3px; flex: none; white-space: nowrap; font-size: 12px; }
.w86 { width: 86px; }
.w45 { width: 45px; }
.w47 { width: 46px; }
.w127 { width: 126px; }
.w149 { width: 148px; }
.w124 { width: 124px; }
.w97 { width: 97px; }
.gapl { margin-left: 8px; }
.fb { width: 22px; height: 20px; background: #e1e1e1; border: 1px solid #adadad; margin-left: 2px; flex: none; display: flex; align-items: center; justify-content: center; }
.fb.sg { font: 14px/16px "Liberation Serif", serif; color: #333; }
.fb.dis { background: #cfcfcf; border-color: #c4c4c4; }
.fb.sg.dis { background: #e6e6e6; color: #9a9a9a; }
.s22 { width: 23px; }
.link { color: #0000f0; text-decoration: underline; display: block; line-height: 16px; }
.mt { margin-top: -3px; }
.dim { height: 105px; }
.lim { height: 122px; padding: 4px 6px 0 6px; }
.limhead { height: 18px; display: flex; padding-left: 46px; }
.limhead span:last-child { margin-left: 62px; }
.fx { width: 17px; flex: none; }
.con { padding: 0; height: 150px; }
.con .link { margin: 0 0 3px 6px; }
.dg { border: 1px solid #000; background: #ababab; overflow: hidden; }
.g1h { height: 100px; margin: 0 2px 0 0; padding-top: 2px; }
.dgr { display: grid; grid-template-columns: 19px 67px 67px 1fr; height: 20px; background: #ababab; }
.dgr.tall { height: 21px; }
.dgr b { font-weight: 400; background: #fff; border-right: 1px solid #a0a0a0; border-bottom: 1px solid #a0a0a0; padding: 2px 0 0 8px; }
.dgr b:last-child { border-right: 0; padding-left: 7px; }
.dgr b:first-child { background: #f4f4f4; border-right: 1px solid #909090; }
.alt { margin: 3px 0 0 0; }
.fa { width: 43px; padding-left: 5px; flex: none; }
.cot { padding: 1px 6px 0 4px; height: 177px; }
.rad { height: 24px; display: flex; align-items: center; }
.radio { width: 13px; height: 13px; border-radius: 50%; border: 1px solid #333; margin-right: 5px; position: relative; background: #fff; flex: none; }
.radio.on::after { content: ""; position: absolute; left: 2px; top: 2px; width: 7px; height: 7px; border-radius: 50%; background: #333; }
.fx2 { width: 16px; padding-left: 1px; flex: none; }
.cot .rad + .fr { margin-top: 3px; }
.plain { color: #6a6a6a; padding-left: 1px; }
.cot .plain { margin-top: -5px; }
.last { border-radius: 0; border-bottom: 0; }
.shchk { display: flex; align-items: center; }
.check { width: 13px; height: 13px; border: 1px solid #333; background: #fff; margin-right: 4px; flex: none; display: block; }
.check.lt { border-color: #c9c9c9; }
.check svg { width: 11px; height: 11px; display: block; }
.fur { padding: 4px 4px 0 4px; }
.fw { width: 90px; flex: none; color: #555; }
.fw.gr { color: #777; }
.fur .fr { margin-bottom: 0; }
.fur .r1 { margin-bottom: 8px; }
.fur .r2 { height: 20px; margin-bottom: 6px; }
.fur .r3 { height: 20px; }
.inp.dis { background: #f0f0f0; border-color: #c9c9c9; color: #6d6d6d; }
.spin { display: flex; justify-content: flex-end; padding-right: 0; height: 20px; }
.spn { width: 16px; margin-left: 2px; display: flex; flex-direction: column; border-left: 1px solid #d6d6d6; flex: none; }
.up, .dn { flex: 1; position: relative; }
.up::after { content: ""; position: absolute; left: 5px; top: 3px; border: 3px solid transparent; border-bottom: 3px solid #555; border-top: 0; }
.dn::after { content: ""; position: absolute; left: 5px; top: 3px; border: 3px solid transparent; border-top: 3px solid #555; border-bottom: 0; }
.chk { height: 18px; margin-top: 4px; display: flex; align-items: center; color: #666; }
.forma { margin: 8px 0 0 -2px; padding: 0 6px 0 7px; border: 1px solid #dcdcdc; width: 220px; height: 160px; min-width: 0; }
.forma legend { padding: 0 2px; margin-left: 5px; color: #8c8c8c; font-size: 11.400px; line-height: 12px; }
.forma .f1 { padding: 0; margin-top: 1px; line-height: 18px; }
.forma .f2 { margin: 6px 0 0; }
.ticked { margin-right: 6px; }
.g2h { margin: 9px 0 0 -1px; height: 100px; width: 206px; padding-top: 2px; }
.g2c { grid-template-columns: 20px 60px 62px 1fr; }

.redarrow { position: absolute; left: 826px; top: 11px; width: 70px; height: 70px; }
```
